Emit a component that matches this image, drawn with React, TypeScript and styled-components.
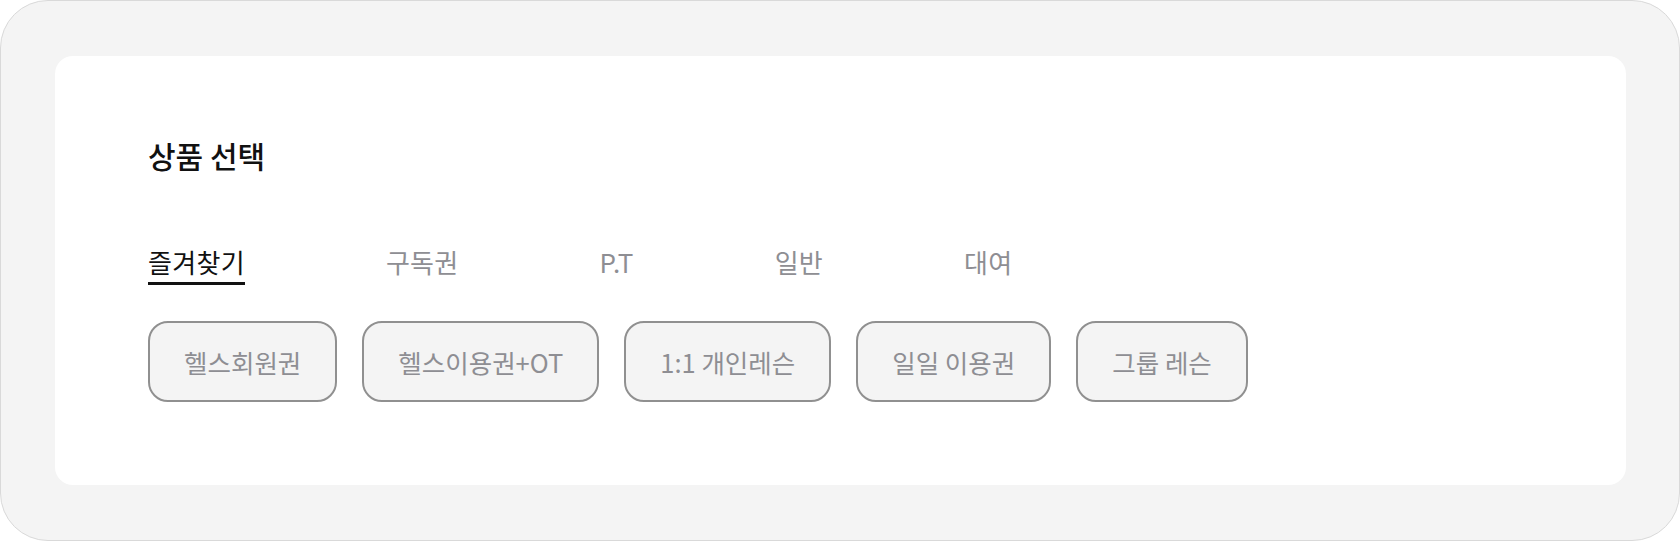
import React, { useState } from 'react'
import styled, { createGlobalStyle } from 'styled-components'

const GlobalStyle = createGlobalStyle`
  html, body {
    margin: 0;
    padding: 0;
    background: #ffffff;
  }
  body {
    font-family: 'Noto Sans CJK KR', 'Noto Sans', sans-serif;
  }
  * {
    box-sizing: border-box;
  }
`

const Frame = styled.div`
  width: 1680px;
  height: 541px;
  background-color: #f4f4f4;
  border: 1px solid #d9d9d9;
  border-radius: 48px;
  padding: 55px 53px 55px 54px;
  display: flex;
`

const Card = styled.section`
  flex: 1;
  background-color: #ffffff;
  border-radius: 18px;
  padding: 79px 93px;
  display: flex;
  flex-direction: column;
`

const Title = styled.h2`
  margin: 0;
  font-size: 30px;
  line-height: 40px;
  font-weight: 500;
  color: #111111;
`

const TabRow = styled.div`
  display: flex;
  gap: 141px;
  margin-top: 70px;
`

const Tab = styled.button<{ $active?: boolean }>`
  background: none;
  border: none;
  padding: 0 0 3px;
  margin: 0;
  font-family: inherit;
  font-size: 26px;
  line-height: 34px;
  font-weight: 400;
  letter-spacing: 0.3px;
  color: ${(p) => (p.$active ? '#111111' : '#8e8e93')};
  border-bottom: 3px solid ${(p) => (p.$active ? '#111111' : 'transparent')};
  cursor: pointer;
`

const ChipRow = styled.div`
  display: flex;
  gap: 25px;
  margin-top: 36px;
`

const Chip = styled.button`
  height: 81px;
  padding: 0 34px;
  background-color: #f4f4f4;
  border: 2px solid #909090;
  border-radius: 20px;
  font-family: inherit;
  font-size: 25.5px;
  font-weight: 400;
  color: #8e8e93;
  cursor: pointer;
`

const tabs = ['즐겨찾기', '구독권', 'P.T', '일반', '대여']
const chips = ['헬스회원권', '헬스이용권+OT', '1:1 개인레슨', '일일 이용권', '그룹 레슨']

export default function App() {
  const [active, setActive] = useState(0)

  return (
    <>
      <GlobalStyle />
      <Frame>
        <Card>
          <Title>상품 선택</Title>
          <TabRow>
            {tabs.map((t, i) => (
              <Tab key={t} $active={i === active} onClick={() => setActive(i)}>
                {t}
              </Tab>
            ))}
          </TabRow>
          <ChipRow>
            {chips.map((c) => (
              <Chip key={c}>{c}</Chip>
            ))}
          </ChipRow>
        </Card>
      </Frame>
    </>
  )
}
